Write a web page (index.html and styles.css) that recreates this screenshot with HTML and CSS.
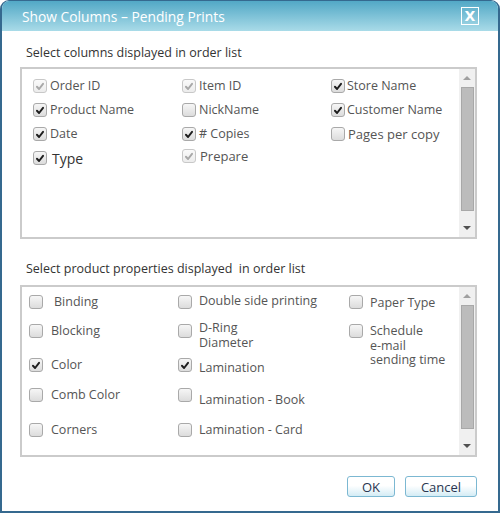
FILE: index.html
```html
<!DOCTYPE html>
<html>
<head>
<meta charset="utf-8">
<link rel="stylesheet" href="styles.css">
</head>
<body>
<div class="dialog">
  <div class="titlebar">
    <span class="title">Show Columns – Pending Prints</span>
    <span class="close">X</span>
  </div>
  <div class="content">
    <div class="label">Select columns displayed in order list</div>
    <div class="box">
      <div class="grid g1">
        <div class="item"><span class="cb dis"><svg viewBox="0 0 13 13"><path d="M3.2 6.8 L5.5 9.2 L9.8 3.6"/></svg></span><span class="t">Order ID</span></div>
        <div class="item"><span class="cb dis"><svg viewBox="0 0 13 13"><path d="M3.2 6.8 L5.5 9.2 L9.8 3.6"/></svg></span><span class="t">Item ID</span></div>
        <div class="item"><span class="cb on"><svg viewBox="0 0 13 13"><path d="M3.2 6.8 L5.5 9.2 L9.8 3.6"/></svg></span><span class="t">Store Name</span></div>
        <div class="item"><span class="cb on"><svg viewBox="0 0 13 13"><path d="M3.2 6.8 L5.5 9.2 L9.8 3.6"/></svg></span><span class="t">Product Name</span></div>
        <div class="item"><span class="cb"></span><span class="t">NickName</span></div>
        <div class="item"><span class="cb on"><svg viewBox="0 0 13 13"><path d="M3.2 6.8 L5.5 9.2 L9.8 3.6"/></svg></span><span class="t">Customer Name</span></div>
        <div class="item"><span class="cb on"><svg viewBox="0 0 13 13"><path d="M3.2 6.8 L5.5 9.2 L9.8 3.6"/></svg></span><span class="t">Date</span></div>
        <div class="item"><span class="cb on"><svg viewBox="0 0 13 13"><path d="M3.2 6.8 L5.5 9.2 L9.8 3.6"/></svg></span><span class="t"># Copies</span></div>
        <div class="item"><span class="cb"></span><span class="t big gap">Pages per copy</span></div>
        <div class="item"><span class="cb on"><svg viewBox="0 0 13 13"><path d="M3.2 6.8 L5.5 9.2 L9.8 3.6"/></svg></span><span class="t type">Type</span></div>
        <div class="item up2"><span class="cb dis"><svg viewBox="0 0 13 13"><path d="M3.2 6.8 L5.5 9.2 L9.8 3.6"/></svg></span><span class="t big gap">Prepare</span></div>
      </div>
      <div class="scroll">
        <div class="arrow uparr"></div>
        <div class="thumb t1"></div>
        <div class="arrow downarr"></div>
      </div>
    </div>

    <div class="label label2">Select product properties displayed&nbsp; in order list</div>
    <div class="box">
      <div class="grid g2">
        <div class="item c1 r1"><span class="cb"></span><span class="t p2 gap">Binding</span></div>
        <div class="item c2 r1"><span class="cb"></span><span class="t p2 up1">Double side printing</span></div>
        <div class="item c3 r1"><span class="cb"></span><span class="t p2 dn1">Paper Type</span></div>

        <div class="item c1 r2"><span class="cb"></span><span class="t p2">Blocking</span></div>
        <div class="item c2 r2"><span class="cb"></span><span class="t p2 multi dring">D-Ring<br>Diameter</span></div>
        <div class="item c3 r2"><span class="cb"></span><span class="t p2 multi sched">Schedule<br>e-mail<br>sending time</span></div>

        <div class="item c1 r3"><span class="cb on"><svg viewBox="0 0 13 13"><path d="M3.2 6.8 L5.5 9.2 L9.8 3.6"/></svg></span><span class="t p2">Color</span></div>
        <div class="item c2 r3"><span class="cb on"><svg viewBox="0 0 13 13"><path d="M3.2 6.8 L5.5 9.2 L9.8 3.6"/></svg></span><span class="t p2 dn3">Lamination</span></div>

        <div class="item c1 r4"><span class="cb"></span><span class="t p2">Comb Color</span></div>
        <div class="item c2 r4"><span class="cb"></span><span class="t p2 dn5">Lamination - Book</span></div>

        <div class="item c1 r5"><span class="cb"></span><span class="t p2">Corners</span></div>
        <div class="item c2 r5"><span class="cb"></span><span class="t p2">Lamination - Card</span></div>
      </div>
      <div class="scroll">
        <div class="arrow uparr"></div>
        <div class="thumb t2"></div>
        <div class="arrow downarr"></div>
      </div>
    </div>

    <div class="buttons">
      <button class="btn ok">OK</button>
      <button class="btn cancel">Cancel</button>
    </div>
  </div>
</div>
</body>
</html>
```

FILE: styles.css
```css
html, body {
  margin: 0;
  padding: 0;
  background: #ffffff;
}
body {
  font-family: "Open Sans", "DejaVu Sans", sans-serif;
  width: 500px;
  height: 513px;
}
.dialog {
  box-sizing: border-box;
  width: 500px;
  height: 513px;
  border: 2px solid #35698f;
  border-top: 1px solid #35698f;
  border-radius: 9px 9px 0 0;
  background: #ffffff;
  display: flex;
  flex-direction: column;
  overflow: hidden;
}
.titlebar {
  height: 30px;
  flex: none;
  background: linear-gradient(#52a8c6, #a9dbe8);
  display: flex;
  align-items: center;
  justify-content: space-between;
  padding: 0 19px 0 20px;
}
.title {
  color: #ffffff;
  font-size: 13.8px;
}
.close {
  box-sizing: border-box;
  width: 18px;
  height: 18px;
  border: 1px solid #ffffff;
  color: #ffffff;
  font-family: "DejaVu Sans", sans-serif;
  font-weight: bold;
  font-size: 14px;
  line-height: 16px;
  text-align: center;
  margin-top: -1px;
}
.content {
  flex: 1;
  display: flex;
  flex-direction: column;
  padding: 14px 21px 0 18px;
}
.label {
  font-size: 12.5px;
  line-height: 16px;
  color: #333333;
  padding-left: 6px;
  height: 16px;
}
.label2 {
  margin-top: 22px;
}
.box {
  box-sizing: border-box;
  margin-top: 6px;
  height: 172px;
  border: 2px solid #cbcbcb;
  display: flex;
}
.label2 + .box {
  margin-top: 8px;
}
.grid {
  flex: 1;
  display: grid;
  grid-template-columns: 149px 150px 1fr;
}
.g1 {
  padding: 9px 0 0 11px;
  grid-template-rows: 24px 24px 24px 24px;
  grid-auto-rows: 24px;
  align-content: start;
}
.g2 {
  padding: 7px 0 0 7px;
  grid-template-rows: 29px 34px 30px 35px 30px;
  align-content: start;
}
.g2 .c1 { grid-column: 1; }
.g2 .c2 { grid-column: 2; }
.g2 .c3 { grid-column: 3; padding-left: 21px; }
.g2 .r1 { grid-row: 1; }
.g2 .r2 { grid-row: 2; }
.g2 .r3 { grid-row: 3; }
.g2 .r4 { grid-row: 4; }
.g2 .r5 { grid-row: 5; }
.item {
  display: flex;
  align-items: flex-start;
  height: 16px;
  position: relative;
}
.g1 .item:nth-child(3n) .cb { margin-left: -1px; }
.g1 .item:nth-child(3n) .t { padding-left: 2px; }
.up2 { margin-top: -2px; }
.cb {
  box-sizing: border-box;
  flex: none;
  width: 14px;
  height: 14px;
  margin-top: 1px;
  border: 1px solid #a9a9a9;
  border-radius: 3px;
  background: linear-gradient(#f6f6f6, #dcdcdc);
  display: flex;
  align-items: center;
  justify-content: center;
}
.cb svg {
  width: 13px;
  height: 13px;
  fill: none;
  stroke: #1e1e1e;
  stroke-width: 2.1;
  stroke-linecap: round;
  stroke-linejoin: round;
}
.cb.dis {
  border-color: #c8c8c8;
  background: linear-gradient(#fafafa, #ececec);
}
.cb.dis svg {
  stroke: #a8a8a8;
}
.t {
  font-size: 12.5px;
  line-height: 16px;
  color: #555555;
  padding-left: 3px;
  white-space: nowrap;
}
.g1 .big {
  font-size: 13px;
  padding-left: 4px;
}
.g1 .item:nth-child(3n) .big { padding-left: 3px; }
.type {
  font-size: 14px;
  color: #333333;
  padding-left: 5px;
  margin-top: 1px;
}
.p2 {
  padding-left: 8px;
}
.g2 .c2 .t { padding-left: 7px; }
.g2 .c3 .t { padding-left: 7px; }
.g2 .c1 .gap { padding-left: 11px; }
.up1 { margin-top: -1px; }
.dn1 { margin-top: 1px; }
.dn3 { margin-top: 3px; }
.dn5 { margin-top: 5px; }
.multi {
  line-height: 15px;
}
.dring { margin-top: -3px; }
.sched { margin-top: 1px; line-height: 14.5px; }
.scroll {
  flex: none;
  width: 16px;
  background: #f0f0f0;
  display: flex;
  flex-direction: column;
  align-items: center;
}
.arrow {
  width: 0;
  height: 0;
  border-left: 4px solid transparent;
  border-right: 4px solid transparent;
  flex: none;
}
.uparr {
  border-bottom: 4px solid #a0a0a0;
  margin-top: 7px;
}
.downarr {
  border-top: 4px solid #505050;
  margin-top: auto;
  margin-bottom: 7px;
}
.thumb {
  box-sizing: border-box;
  width: 13px;
  background: #bcbcbc;
  border: 1px solid #a8a8a8;
  flex: none;
}
.t1 {
  margin-top: 7px;
  height: 124px;
}
.t2 {
  margin-top: 7px;
  height: 124px;
}
.buttons {
  display: flex;
  justify-content: flex-end;
  gap: 10px;
  margin-top: 19px;
}
.btn {
  box-sizing: border-box;
  height: 21px;
  border: 1px solid #7cb8d2;
  border-radius: 3px;
  background: linear-gradient(#ffffff 0%, #ffffff 45%, #d4ecf5 100%);
  font-family: "Open Sans", "DejaVu Sans", sans-serif;
  font-size: 13px;
  color: #2a3550;
  padding: 0;
  line-height: 18px;
}
.ok { width: 48px; }
.cancel { width: 72px; }
```
